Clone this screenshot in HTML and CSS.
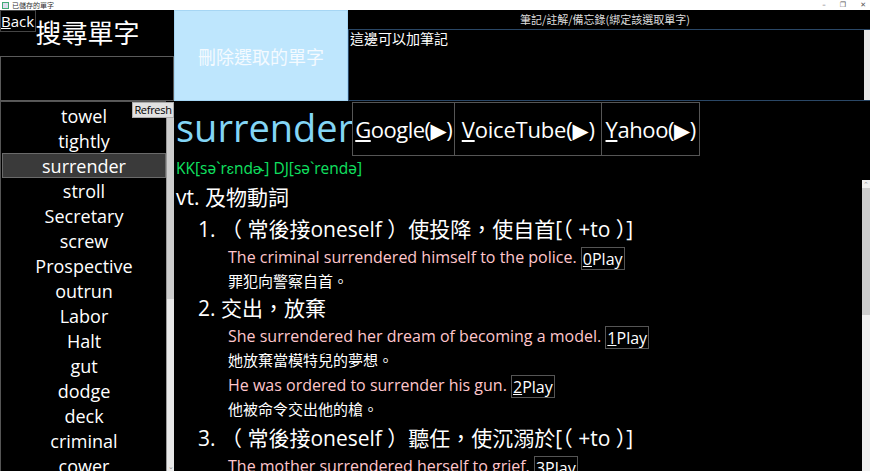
FILE: index.html
```html
<!DOCTYPE html>
<html lang="zh-Hant">
<head>
<meta charset="utf-8">
<title>已儲存的單字</title>
<link rel="stylesheet" href="styles.css">
</head>
<body>
<div class="titlebar">
  <div class="title-left"><span class="app-icon"></span><span class="title-text">已儲存的單字</span></div>
  <div class="win-ctrls"><span>–</span><span>❐</span><span>✕</span></div>
</div>
<div class="app">
  <div class="top">
    <div class="left-top">
      <div class="search-title">搜尋單字<button class="back"><u>B</u>ack</button></div>
      <div class="search-box"></div>
    </div>
    <button class="delete">刪除選取的單字</button>
    <div class="notes">
      <div class="notes-head">筆記/註解/備忘錄(綁定該選取單字)</div>
      <div class="notes-area">
        <div class="notes-text">這邊可以加筆記</div>
        <div class="notes-scroll"></div>
      </div>
    </div>
  </div>
  <div class="bottom">
    <div class="list-col">
      <ul class="word-list">
        <li>towel</li>
        <li>tightly</li>
        <li class="selected">surrender</li>
        <li>stroll</li>
        <li>Secretary</li>
        <li>screw</li>
        <li>Prospective</li>
        <li>outrun</li>
        <li>Labor</li>
        <li>Halt</li>
        <li>gut</li>
        <li>dodge</li>
        <li>deck</li>
        <li>criminal</li>
        <li>cower</li>
      </ul>
      <div class="list-scroll"><div class="list-thumb"></div><div class="arrow-down">⌄</div></div>
      <button class="refresh">Refresh</button>
    </div>
    <div class="content">
      <div class="doc">
        <div class="word-row">
          <span class="word">surrender</span>
          <button class="src src-google"><u>G</u>oogle(<span class="tri">▶</span>)</button>
          <button class="src src-voice"><u>V</u>oiceTube(<span class="tri">▶</span>)</button>
          <button class="src src-yahoo"><u>Y</u>ahoo(<span class="tri">▶</span>)</button>
        </div>
        <div class="phon">KK[sə`rɛndɚ] DJ[sə`rendə]</div>
        <div class="pos">vt. 及物動詞</div>
        <div class="def">1. （ 常後接oneself ）使投降，使自首[（ +to ）]</div>
        <div class="ex">The criminal surrendered himself to the police. <button class="play"><u>0</u>Play</button></div>
        <div class="zh">罪犯向警察自首。</div>
        <div class="def">2. 交出，放棄</div>
        <div class="ex">She surrendered her dream of becoming a model. <button class="play"><u>1</u>Play</button></div>
        <div class="zh">她放棄當模特兒的夢想。</div>
        <div class="ex">He was ordered to surrender his gun. <button class="play"><u>2</u>Play</button></div>
        <div class="zh">他被命令交出他的槍。</div>
        <div class="def def3">3. （ 常後接oneself ）聽任，使沉溺於[（ +to ）]</div>
        <div class="ex">The mother surrendered herself to grief. <button class="play"><u>3</u>Play</button></div>
      </div>
      <div class="doc-scroll"><div class="arrow-up">⌃</div><div class="doc-thumb"></div></div>
    </div>
  </div>
</div>
</body>
</html>
```

FILE: styles.css
```css
* { box-sizing: border-box; }
html, body { margin: 0; padding: 0; }
body {
  background: #000;
  width: 870px;
  height: 471px;
  overflow: hidden;
  font-family: "Open Sans", "Noto Sans CJK TC", sans-serif;
  color: #fff;
}
button {
  font-family: inherit;
  margin: 0;
  cursor: default;
}

/* title bar */
.titlebar {
  height: 10px;
  background: #fff;
  display: flex;
  justify-content: space-between;
  align-items: center;
  color: #333;
}
.title-left { display: flex; align-items: center; gap: 3px; padding-left: 2px; }
.app-icon { width: 7px; height: 7px; border: 1px solid #4a7; background: #dde; display: inline-block; }
.title-text { font-family: "Noto Sans CJK TC", sans-serif; font-size: 7px; line-height: 10px; }
.win-ctrls { display: flex; gap: 14px; padding-right: 4px; font-size: 7px; line-height: 10px; color: #555; font-family: "DejaVu Sans", sans-serif; }

/* top region */
.top {
  display: grid;
  grid-template-columns: 174px 174px 1fr;
  height: 91px;
}
.left-top { display: flex; flex-direction: column; }
.search-title {
  position: relative;
  height: 46px;
  display: flex;
  justify-content: center;
  align-items: center;
  font-family: "Noto Sans CJK TC", sans-serif;
  font-size: 26px;
  line-height: 1;
  padding-bottom: 2px;
  padding-left: 1px;
}
.back {
  position: absolute;
  left: 0;
  top: 0;
  width: 36px;
  height: 22px;
  padding: 0;
  background: #000;
  color: #fff;
  border: 1px solid #444;
  font-family: "Open Sans", sans-serif;
  font-size: 15px;
  line-height: 18px;
  text-align: left;
}
.search-box {
  flex: 1;
  border: 1px solid #5a5a5a;
  background: #000;
}
.delete {
  background: #bee6fd;
  border: 1px solid #a6d6f4;
  color: #f4faff;
  font-family: "Noto Sans CJK TC", sans-serif;
  font-size: 18px;
  padding: 0;
}
.notes { display: flex; flex-direction: column; }
.notes-head {
  height: 19px;
  text-align: center;
  font-family: "Noto Sans CJK TC", sans-serif;
  font-size: 11px;
  line-height: 19px;
  color: #ddd;
  padding-right: 8px;
}
.notes-area {
  flex: 1;
  display: flex;
  border: 1px solid #2a4766;
  border-right: none;
}
.notes-text {
  flex: 1;
  font-family: "Noto Sans CJK TC", sans-serif;
  font-size: 14px;
  line-height: 14px;
  padding-left: 1px;
  padding-top: 1px;
}
.notes-scroll { width: 6px; background: #e8e8e8; }

/* bottom region */
.bottom {
  display: grid;
  grid-template-columns: 174px 1fr;
  height: 370px;
  overflow: hidden;
}
.list-col {
  position: relative;
  display: flex;
  overflow: hidden;
}
.word-list {
  list-style: none;
  margin: 0;
  padding: 1px 0 0 1px;
  flex: 1;
  border-left: 1px solid #555;
  border-top: 1px solid #555;
  font-size: 18px;
}
.word-list li {
  height: 25px;
  line-height: 25px;
  text-align: center;
  border: 1px solid transparent;
}
.word-list li.selected {
  background: #3a3a3a;
  border-color: #6a6a6a;
}
.list-scroll {
  width: 8px;
  margin-top: 17px;
  background: #e8e8e8;
  border-left: 1px solid #999;
  display: flex;
  flex-direction: column;
  position: relative;
}
.list-thumb { height: 181px; background: #cdcdcd; }
.arrow-down {
  position: absolute;
  bottom: 1px;
  left: 0;
  width: 7px;
  font-size: 7px;
  line-height: 6px;
  color: #888;
  text-align: center;
}
.refresh {
  position: absolute;
  top: 1px;
  right: 0;
  width: 42px;
  height: 16px;
  padding: 0;
  background: #e1e1e1;
  border: 1px solid #adadad;
  color: #000;
  font-family: "Open Sans", sans-serif;
  font-size: 11px;
  letter-spacing: -0.3px;
  line-height: 14px;
  text-align: center;
  white-space: nowrap;
  overflow: hidden;
}

.content {
  display: flex;
  overflow: hidden;
}
.doc {
  flex: 1;
  padding-left: 2px;
  padding-top: 1px;
  overflow: hidden;
}
.word-row {
  display: flex;
  height: 54px;
}
.word {
  font-size: 38px;
  line-height: 50px;
  color: #83d5f5;
  margin-right: -1px;
}
.src {
  background: #000;
  color: #fff;
  border: 1px solid #555;
  font-size: 22px;
  padding: 0;
  height: 54px;
  margin-left: -1px;
  white-space: nowrap;
  letter-spacing: -0.2px;
}
.src-google { width: 103px; margin-left: 0; letter-spacing: -0.5px; }
.src-voice { width: 148px; }
.src-yahoo { width: 99px; letter-spacing: -0.4px; }
.tri { font-family: "DejaVu Sans", sans-serif; font-size: 21px; }
.phon {
  height: 24px;
  line-height: 24px;
  color: #10e060;
  font-size: 15.5px;
}
.pos {
  height: 34px;
  line-height: 34px;
  font-size: 21px;
}
.def {
  height: 30px;
  line-height: 30px;
  font-size: 21px;
  padding-left: 22px;
  white-space: nowrap;
}
.def3 { height: 32px; line-height: 34px; }
.ex {
  height: 26px;
  line-height: 26px;
  font-size: 16px;
  color: #ffc6cc;
  padding-left: 52px;
  white-space: nowrap;
}
.play {
  background: #000;
  color: #fff;
  border: 1px solid #555;
  font-size: 16px;
  height: 23px;
  line-height: 20px;
  padding: 0 1px;
  vertical-align: middle;
}
.zh {
  height: 23px;
  line-height: 23px;
  font-size: 15px;
  padding-left: 52px;
}
.doc-scroll {
  width: 8px;
  margin-top: 79px;
  background: #f0f0f0;
  position: relative;
}
.arrow-up {
  height: 8px;
  font-size: 7px;
  line-height: 10px;
  text-align: center;
  color: #999;
}
.doc-thumb { height: 127px; background: #cdcdcd; }
```
